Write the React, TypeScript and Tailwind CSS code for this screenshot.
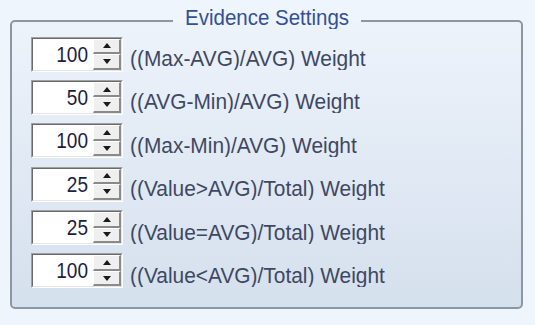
import React from "react";

const rows = [
  { v: "100", label: "((Max-AVG)/AVG) Weight" },
  { v: "50", label: "((AVG-Min)/AVG) Weight" },
  { v: "100", label: "((Max-Min)/AVG) Weight" },
  { v: "25", label: "((Value>AVG)/Total) Weight" },
  { v: "25", label: "((Value=AVG)/Total) Weight" },
  { v: "100", label: "((Value<AVG)/Total) Weight" },
];

function Arrow({ up }: { up: boolean }) {
  return (
    <svg width="8" height="5" viewBox="0 0 8 5">
      {up ? <polygon points="4,0 8,5 0,5" fill="#1a1a1a" /> : <polygon points="0,0 8,0 4,5" fill="#1a1a1a" />}
    </svg>
  );
}

function SpinButton({ up }: { up: boolean }) {
  return (
    <div className="flex-1 flex items-center justify-center bg-[#efefef] border-t border-l border-t-white border-l-white border-b-2 border-r-2 border-b-[#8a8a8a] border-r-[#8a8a8a]">
      <Arrow up={up} />
    </div>
  );
}

function NumericUpDown({ value }: { value: string }) {
  return (
    <div className="w-[92px] h-[35px] border border-t-[#a0a0a0] border-l-[#a0a0a0] border-b-white border-r-white">
      <div className="w-full h-full flex border border-t-[#6a6a6a] border-l-[#6a6a6a] border-b-[#e6e6e6] border-r-[#e6e6e6] bg-white">
        <div className="flex-1 flex items-center justify-end pr-[5px] text-[19px] leading-none text-[#1c1c44]">
          <span className="scale-y-[1.15] inline-block">{value}</span>
        </div>
        <div className="w-[28px] flex flex-col">
          <SpinButton up={true} />
          <SpinButton up={false} />
        </div>
      </div>
    </div>
  );
}

export default function App() {
  return (
    <div
      className="w-[535px] h-[325px] bg-[#eef5fc] pt-[5px] pl-[10px] pr-[12px]"
      style={{ fontFamily: '"Liberation Sans", Arial, sans-serif' }}
    >
      <fieldset className="m-0 min-w-0 border-2 border-[#8c97a2] rounded-[5px] bg-gradient-to-b from-[#edf3fb] to-[#d5e0ed] px-[19px] pb-[19px]">
        <legend className="ml-[142px] px-[12px] pb-[8px] text-[20.5px] leading-[24px] text-[#34509a]">
          <span className="inline-block scale-y-[1.08]">Evidence Settings</span>
        </legend>
        <div className="flex flex-col gap-[9.4px]">
          {rows.map((r, i) => (
            <div key={i} className="flex items-center h-[34px] gap-[7px]">
              <NumericUpDown value={r.v} />
              <div className="pt-[8px] text-[20.9px] leading-[24px] text-[#3e4862] whitespace-nowrap">
                <span className="inline-block scale-y-[1.08]">{r.label}</span>
              </div>
            </div>
          ))}
        </div>
      </fieldset>
    </div>
  );
}
